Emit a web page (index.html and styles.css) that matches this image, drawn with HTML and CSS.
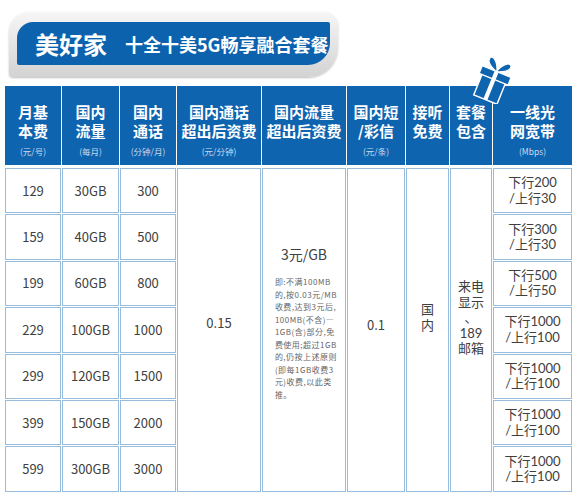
FILE: index.html
```html
<!DOCTYPE html>
<html lang="zh-CN">
<head>
<meta charset="utf-8">
<title>美好家 十全十美5G畅享融合套餐</title>
<link rel="stylesheet" href="styles.css">
</head>
<body>
<div class="page">
  <div class="banner">
    <div class="banner-inner">
      <span class="brand">美好家</span>
      <span class="slogan">十全十美5G畅享融合套餐</span>
    </div>
  </div>

  <div class="table">
    <svg class="gift" viewBox="0 0 40 46" width="42" height="48" aria-hidden="true">
      <g transform="rotate(22 20 26)">
        <rect x="8" y="20" width="24" height="23" fill="#0f64b0" stroke="#ffffff" stroke-width="1.4"/>
        <rect x="5" y="14" width="30" height="8" fill="#0f64b0" stroke="#ffffff" stroke-width="1.4"/>
        <rect x="18" y="14" width="4" height="29" fill="#ffffff"/>
        <path d="M19 14 C14 12 8 9 9 4.5 C10.5 1 16 3 20 13 Z" fill="#0f64b0" stroke="#ffffff" stroke-width="1.2"/>
        <path d="M21 14 C26 12 32 9 31 4.5 C29.5 1 24 3 20 13 Z" fill="#0f64b0" stroke="#ffffff" stroke-width="1.2"/>
      </g>
    </svg>

    <div class="thead">
      <div class="th">月基<br>本费<span class="unit">(元/号)</span></div>
      <div class="th">国内<br>流量<span class="unit">(每月)</span></div>
      <div class="th">国内<br>通话<span class="unit">(分钟/月)</span></div>
      <div class="th">国内通话<br>超出后资费<span class="unit">(元/分钟)</span></div>
      <div class="th">国内流量<br>超出后资费</div>
      <div class="th">国内短<br>/彩信<span class="unit">(元/条)</span></div>
      <div class="th">接听<br>免费</div>
      <div class="th">套餐<br>包含</div>
      <div class="th">一线光<br>网宽带<span class="unit">(Mbps)</span></div>
    </div>

    <div class="tbody">
      <div class="td span c4 val015">0.15</div>
      <div class="td span c5 flowcell">
        <div class="price">3元/GB</div>
        <div class="note">即:不满100MB<br>的,按0.03元/MB<br>收费,达到3元后,<br>100MB(不含)—<br>1GB(含)部分,免<br>费使用;超过1GB<br>的,仍按上述原则<br>(即每1GB收费3<br>元)收费,以此类<br>推。</div>
      </div>
      <div class="td span c6 val01">0.1</div>
      <div class="td span c7 vert">国<br>内</div>
      <div class="td span c8 vert">来电<br>显示<br>、<br>189<br>邮箱</div>

      <div class="td">129</div><div class="td">30GB</div><div class="td">300</div><div class="td bw">下行200<br>/上行30</div>
      <div class="td">159</div><div class="td">40GB</div><div class="td">500</div><div class="td bw">下行300<br>/上行30</div>
      <div class="td">199</div><div class="td">60GB</div><div class="td">800</div><div class="td bw">下行500<br>/上行50</div>
      <div class="td">229</div><div class="td">100GB</div><div class="td">1000</div><div class="td bw">下行1000<br>/上行100</div>
      <div class="td">299</div><div class="td">120GB</div><div class="td">1500</div><div class="td bw">下行1000<br>/上行100</div>
      <div class="td">399</div><div class="td">150GB</div><div class="td">2000</div><div class="td bw">下行1000<br>/上行100</div>
      <div class="td">599</div><div class="td">300GB</div><div class="td">3000</div><div class="td bw">下行1000<br>/上行100</div>
    </div>
  </div>
</div>
</body>
</html>
```

FILE: styles.css
```css
html, body {
  margin: 0;
  padding: 0;
  background: #ffffff;
}

body {
  font-family: "Noto Sans CJK SC", "Noto Sans", sans-serif;
}

.page {
  width: 578px;
  height: 500px;
  overflow: hidden;
  padding-top: 12px;
  box-sizing: border-box;
}

/* ---------- banner ---------- */
.banner {
  margin-left: 9px;
  width: 329px;
  height: 65px;
  box-sizing: border-box;
  padding: 10px 8px 0 8px;
  border-radius: 20px 14px 30px 4px;
  background: linear-gradient(#f6f6f6, #d3d3d3);
  box-shadow: 0 1px 2px rgba(0, 0, 0, 0.25);
}

.banner-inner {
  height: 43px;
  background: #0d62ae;
  border-radius: 16px 2px 22px 2px;
  display: flex;
  align-items: center;
  padding-left: 18px;
  gap: 18px;
  color: #ffffff;
  font-weight: 700;
  white-space: nowrap;
}

.brand {
  flex: none;
  font-size: 24px;
  line-height: 1;
}

.slogan {
  flex: none;
  font-size: 18px;
  line-height: 1;
}

/* ---------- table ---------- */
.table {
  position: relative;
  margin: 9px 0 0 5px;
  width: 567px;
}

.gift {
  position: absolute;
  left: 466px;
  top: -30px;
  z-index: 2;
}

.thead,
.tbody {
  display: grid;
  grid-template-columns: 56px 57px 56px 84px 84px 58px 43px 42px 79px;
  column-gap: 1px;
}

.thead {
  height: 79px;
}

.th {
  background: #0f64b0;
  color: #ffffff;
  font-weight: 700;
  font-size: 15px;
  line-height: 19px;
  text-align: center;
  padding-top: 16px;
  box-sizing: border-box;
  white-space: nowrap;
}

.unit {
  display: block;
  margin-top: 5px;
  font-size: 8.5px;
  line-height: 12px;
  font-weight: 400;
  color: #c9dbee;
}

.tbody {
  margin-top: 3px;
  grid-template-rows: repeat(7, 45.4px);
  row-gap: 1px;
}

.td {
  border: 1px solid #98bcdc;
  box-sizing: border-box;
  display: flex;
  align-items: center;
  justify-content: center;
  text-align: center;
  color: #404040;
  font-size: 13px;
  line-height: 16px;
  white-space: nowrap;
}

.span { grid-row: 1 / 8; }
.c4 { grid-column: 4; }
.c5 { grid-column: 5; }
.c6 { grid-column: 6; }
.c7 { grid-column: 7; }
.c8 { grid-column: 8; }

.val015 { padding-bottom: 14px; }
.val01 { padding-bottom: 10px; }
.vert {
  padding-bottom: 24px;
  font-family: Lato, "Noto Sans CJK SC", sans-serif;
  font-size: 13px;
  line-height: 15.5px;
}

.flowcell {
  flex-direction: column;
  justify-content: flex-start;
  padding-top: 77px;
}

.price {
  font-size: 14px;
  line-height: 16px;
}

.note {
  margin-top: 14px;
  margin-left: 4px;
  font-size: 8px;
  line-height: 12.5px;
  letter-spacing: 0.5px;
  color: #666666;
  text-align: left;
  white-space: nowrap;
}

.bw {
  font-family: Lato, "Noto Sans CJK SC", sans-serif;
  font-size: 13px;
  line-height: 15.5px;
}
```
